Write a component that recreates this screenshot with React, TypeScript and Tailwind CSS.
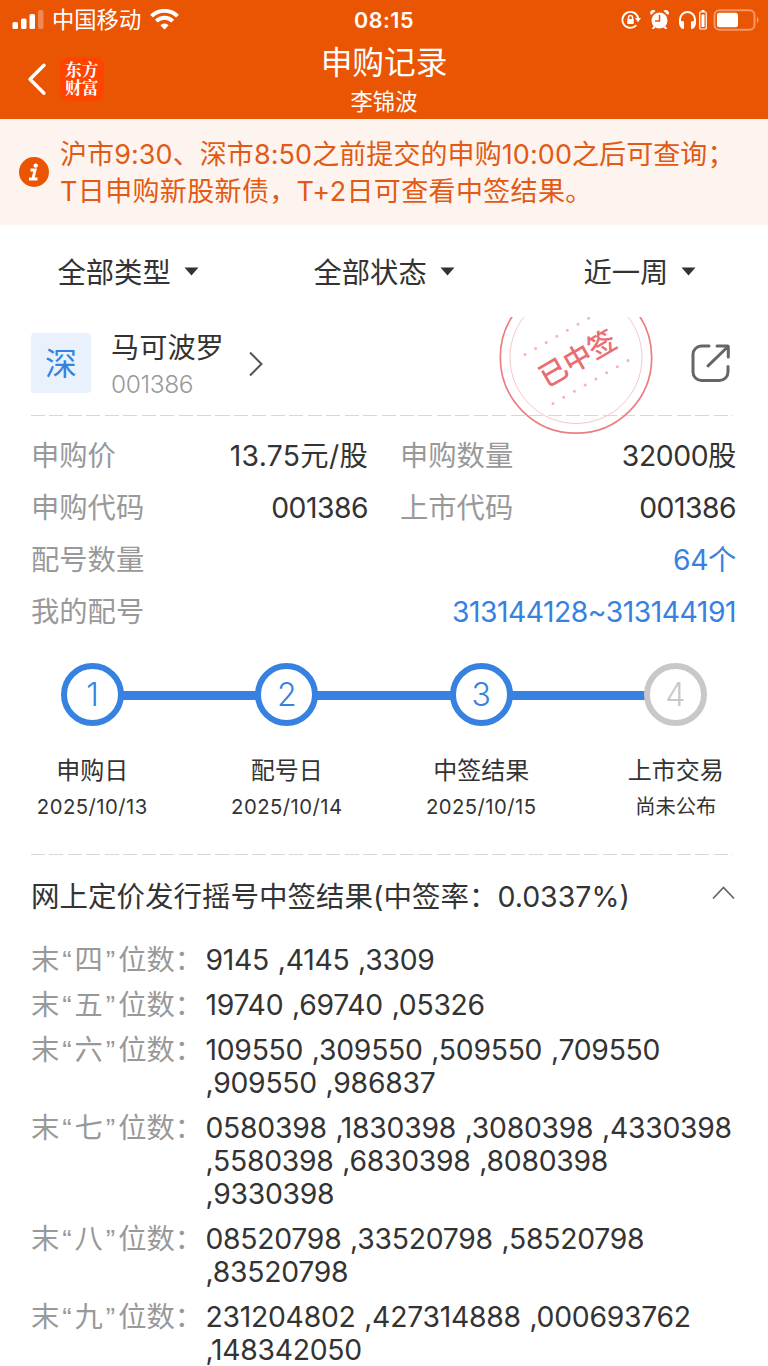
import type { ReactNode } from "react";

const filters = [
  { label: "全部类型", pad: "pl-[57.500px] w-[313.500px]" },
  { label: "全部状态", pad: "w-[270px]" },
  { label: "近一周", pad: "" },
];

const steps = [
  { n: 1, title: "申购日", date: "2025/10/13", done: true },
  { n: 2, title: "配号日", date: "2025/10/14", done: true },
  { n: 3, title: "中签结果", date: "2025/10/15", done: true },
  { n: 4, title: "上市交易", date: "尚未公布", done: false },
];

const results = [
  { digit: "四", lines: ["9145 ,4145 ,3309"] },
  { digit: "五", lines: ["19740 ,69740 ,05326"] },
  { digit: "六", lines: ["109550 ,309550 ,509550 ,709550", ",909550 ,986837"] },
  { digit: "七", lines: ["0580398 ,1830398 ,3080398 ,4330398", ",5580398 ,6830398 ,8080398", ",9330398"] },
  { digit: "八", lines: ["08520798 ,33520798 ,58520798", ",83520798"] },
  { digit: "九", lines: ["231204802 ,427314888 ,000693762", ",148342050"] },
];

function StatusBar() {
  return (
    <div className="grid h-[38px] grid-cols-[1fr_80px_1fr] items-center">
      <div className="flex items-center pl-3">
        <svg width="32" height="20" viewBox="0 0 32 20" fill="#fff">
          <rect x="0.5" y="12" width="5.5" height="7" rx="1.5" />
          <rect x="9" y="8.5" width="5.5" height="10.5" rx="1.5" />
          <rect x="17.500" y="4" width="5.5" height="15" rx="1.5" />
          <rect x="26" y="0" width="5.5" height="19" rx="1.5" opacity="0.3" />
        </svg>
        <span className="ml-2 pt-px text-[22.300px] leading-[38px]">中国移动</span>
        <svg className="ml-[9px] -mt-px" width="29" height="21" viewBox="0 0 29 21" fill="none" stroke="#fff" strokeWidth="4">
          <path d="M1.500 7.200a18.500 18.500 0 0 1 26 0" />
          <path d="M6.300 12.200a11.600 11.600 0 0 1 16.400 0" />
          <path d="M14.500 20.600l-4.200-4.300a6 6 0 0 1 8.400 0z" fill="#fff" stroke="none" />
        </svg>
      </div>
      <span className="pt-px text-center text-[21.500px] font-semibold tracking-[0.500px]">08:15</span>
      <div className="flex items-center justify-end pr-[8px]">
        <svg width="20" height="20" viewBox="0 0 20 20" fill="none" stroke="#fff" strokeWidth="1.8">
          <path d="M17.200 8a8 8 0 1 0-1.800 7.200" />
          <path d="M14 8h6l-3 4.200z" fill="#fff" stroke="none" />
          <rect x="6.300" y="9" width="6.400" height="5" fill="#fff" stroke="none" />
          <path d="M7.500 9V7.500a2 2 0 0 1 4 0V9" strokeWidth="1.400" />
        </svg>
        <svg className="ml-[9px]" width="19" height="20" viewBox="0 0 19 20">
          <circle cx="9.500" cy="10.500" r="8" fill="#fff" />
          <path d="M1 5a3 3 0 0 1 4.500-4zM18 5a3 3 0 0 0-4.500-4zM3.500 16l-1.800 3h2l1.800-1.500zM15.500 16l1.800 3h-2l-1.800-1.500z" fill="#fff" />
          <path d="M9.500 5v6H5" fill="none" stroke="#ea5504" strokeWidth="1.500" />
        </svg>
        <svg className="ml-[9px]" width="19" height="20" viewBox="0 0 19 20">
          <path d="M2 13V9.500a7.500 7.500 0 0 1 15 0V13" fill="none" stroke="#fff" strokeWidth="2" />
          <path d="M1 10.500l5 1v7.500l-2.500-.5q-3-3-2.500-8zM18 10.500l-5 1v7.500l2.500-.5q3-3 2.500-8z" fill="#fff" />
        </svg>
        <svg className="ml-[2px]" width="8" height="20" viewBox="0 0 8 20">
          <path d="M2.500 0h3v2h-3z" fill="#fff" />
          <rect x="0.750" y="2" width="6.500" height="17" rx="1" fill="none" stroke="#fff" strokeWidth="1.200" />
          <rect x="2.500" y="4.500" width="3" height="12.500" fill="#fff" />
        </svg>
        <svg className="ml-[6px]" width="47" height="22" viewBox="0 0 47 22">
          <rect x="1.500" y="1.200" width="40" height="19.600" rx="5" fill="none" stroke="#fff" strokeOpacity="0.400" strokeWidth="2" />
          <rect x="4" y="3.800" width="21" height="14.400" rx="2.500" fill="#fff" />
          <path d="M44 7.500q3 3.500 0 7z" fill="#fff" opacity="0.500" />
        </svg>
      </div>
    </div>
  );
}

function Header() {
  return (
    <header className="h-[119px] bg-[#ea5504] text-white">
      <StatusBar />
      <div className="grid h-[81px] grid-cols-3">
        <div className="flex items-center pl-[27px]">
          <svg width="20" height="34" viewBox="0 0 20 34" fill="none" stroke="#fff" strokeWidth="3.400" strokeLinecap="round" strokeLinejoin="round">
            <path d="M17 3.200L3 17.200l14 14" />
          </svg>
          <p className="ml-[13px] h-[44px] w-[44px] rounded-[9px] bg-[#ff4300] px-[5px] pt-[3px] font-[Noto_Serif_CJK_SC,Noto_Sans_CJK_SC,sans-serif] text-[16.800px] font-bold leading-[18px]">
            东方财富
          </p>
        </div>
        <div className="flex flex-col items-center pt-px">
          <h1 className="h-[47px] text-[31.700px] leading-[47px]">申购记录</h1>
          <p className="text-[22.300px] leading-[31px]">李锦波</p>
        </div>
      </div>
    </header>
  );
}

function Notice() {
  return (
    <section className="flex h-[106px] items-center bg-[#fdf4ef] pl-[19px] text-[#e25a14]">
      <div className="flex h-[30px] w-[30px] items-center justify-center rounded-full bg-[#ea5504]">
        <svg width="12" height="18" viewBox="0 0 12 18" fill="none" stroke="#fff" strokeWidth="2.900">
          <path d="M2.500 7h4.600L5 15.500M1 16h8.500" />
          <circle cx="7.700" cy="2.600" r="2.200" fill="#fff" stroke="none" />
        </svg>
      </div>
      <div className="ml-[11px] whitespace-nowrap pt-[2px] text-[27px] leading-[37px]">
        <p className="tracking-[0.080px]">沪市9:30、深市8:50之前提交的申购10:00之后可查询；</p>
        <p className="tracking-[0.350px]">T日申购新股新债，T+2日可查看中签结果。</p>
      </div>
    </section>
  );
}

function Filters() {
  return (
    <nav className="flex h-[92px] items-center text-[28.300px]">
      {filters.map((f) => (
        <button key={f.label} className={"flex items-center " + f.pad}>
          <span className="pt-[3px] leading-[40px]">{f.label}</span>
          <svg className="ml-[13px]" width="15" height="9" viewBox="0 0 15 9" fill="#333">
            <path d="M0.500 0.500h14l-7 8z" />
          </svg>
        </button>
      ))}
    </nav>
  );
}

function Divider() {
  return <div className="h-[1px] w-[702px] bg-[repeating-linear-gradient(90deg,#d8d8d8_0_14px,transparent_14px_18.450px)]" />;
}

function Stamp() {
  return (
    <svg className="absolute left-[468px] top-0" width="156" height="118" viewBox="0 0 156 118" fill="none">
      <circle cx="77" cy="40.500" r="75.700" stroke="#ec7e82" strokeWidth="1.700" />
      <circle cx="77" cy="40.500" r="66" stroke="#f6c6c8" strokeWidth="1" />
      <path d="M26 37.500L90 1" stroke="#f3b4b7" strokeWidth="3" strokeLinecap="round" strokeDasharray="0 12.200" />
      <path d="M54 86.500L129 43.500" stroke="#f3b4b7" strokeWidth="3" strokeLinecap="round" strokeDasharray="0 12.350" />
      <text x="78" y="51" textAnchor="middle" transform="rotate(-30 79 40)" fill="#ea6d72" fontSize="28" fontWeight="500">已中签</text>
    </svg>
  );
}

function StockRow() {
  return (
    <section className="relative ml-[31px] h-[98px]">
      <div className="flex h-[76px] pt-4">
        <div className="flex h-[60px] w-[60px] items-center justify-center rounded-[4px] bg-[#e8f1fc] pt-[2px] text-[32px] text-[#3782e0]">深</div>
        <div className="-mt-[4px] ml-5 w-[113px]">
          <p className="text-[28.200px] leading-[38px]">马可波罗</p>
          <p className="text-[24.500px] font-[350] leading-[35px] tracking-[-0.400px] text-[#999]">001386</p>
        </div>
        <svg className="ml-[24px] mt-[18px]" width="16" height="26" viewBox="0 0 16 26" fill="none" stroke="#555" strokeWidth="2">
          <path d="M2 1.500L13.500 13 2 24.500" />
        </svg>
        <svg className="ml-[427px] mt-[11px]" width="40" height="39" viewBox="0 0 40 39" fill="none" stroke="#666" strokeWidth="3" strokeLinecap="round">
          <path d="M18 2h-7.500a8.500 8.500 0 0 0-8.500 8.500v17.500a8.500 8.500 0 0 0 8.500 8.500h18a8.500 8.500 0 0 0 8.500-8.500v-5.500" />
          <path d="M26 2h10.500q.8 0 .8.800V13M36.500 3L17 21.800" />
        </svg>
      </div>
      <div className="pt-[22px]"><Divider /></div>
      <Stamp />
    </section>
  );
}

function Field({ label, children, className = "" }: { label: string; children: ReactNode; className?: string }) {
  return (
    <div className={"flex h-[52px] items-center justify-between whitespace-nowrap " + className}>
      <dt className="text-[#999]">{label}</dt>
      <dd className="text-[#333]">{children}</dd>
    </div>
  );
}

function Details() {
  return (
    <dl className="ml-[31px] mt-[15px] grid w-[705px] grid-cols-[337px_336px] gap-x-[32px] text-[28.300px]">
      <Field label="申购价"><span className="tracking-[0.300px]">13.75元/股</span></Field>
      <Field label="申购数量"><span className="tracking-[-0.400px]">32000股</span></Field>
      <Field label="申购代码"><span className="tracking-[-0.500px]">001386</span></Field>
      <Field label="上市代码"><span className="tracking-[-0.500px]">001386</span></Field>
      <Field label="配号数量" className="col-span-2"><span className="tracking-[-0.400px] text-[#3782e0]">64个</span></Field>
      <Field label="我的配号" className="col-span-2"><span className="tracking-[-0.480px] text-[#3782e0]">313144128~313144191</span></Field>
    </dl>
  );
}

function Timeline() {
  return (
    <section className="mt-[25px] h-[191px]">
      <div className="ml-[61px] flex items-center">
        {steps.map((s, i) => (
          <div key={s.n} className="flex items-center">
            {i > 0 && <div className="-mx-[2px] mt-px h-[9px] w-[135.300px] bg-[#3782e0]" />}
            <div className={s.done ? "relative flex h-[63px] w-[63px] items-center justify-center rounded-full border-[6px] border-[#3782e0] bg-white text-[32px] font-[350] text-[#3782e0]" : "relative flex h-[63px] w-[63px] items-center justify-center rounded-full border-[6px] border-[#c8c8c8] bg-white text-[32px] font-[350] text-[#c8c8c8]"}>{s.n}</div>
          </div>
        ))}
      </div>
      <div className="-ml-[5px] mt-[27px] grid w-[778px] grid-cols-4 text-center text-[#333]">
        {steps.map((s) => (
          <div key={s.n}>
            <p className="text-[24px] leading-[36px]">{s.title}</p>
            <p className={s.done ? "text-[20.300px] leading-[36px] tracking-[0.450px]" : "text-[20.300px] leading-[36px]"}>{s.date}</p>
          </div>
        ))}
      </div>
    </section>
  );
}

function Quote({ children }: { children: string }) {
  return <span className="inline-block w-[15.300px] text-center font-[Liberation_Sans,sans-serif] leading-none">{children}</span>;
}

function Results() {
  return (
    <section className="ml-[31px]">
      <Divider />
      <div className="flex h-[88px] items-center">
        <h2 className="-mt-[4px] w-[680px] whitespace-nowrap text-[28.500px] leading-[84px]">网上定价发行摇号中签结果(中签率：0.0337%)</h2>
        <svg className="-mt-[14px]" width="25" height="15" viewBox="0 0 25 15" fill="none" stroke="#666" strokeWidth="1.800">
          <path d="M2 13.500L12.500 2.500 23 13.500" />
        </svg>
      </div>
      <div className="mt-px flex flex-col gap-3 whitespace-nowrap text-[28.300px] leading-[33px]">
        {results.map((r) => (
          <div key={r.digit} className="flex">
            <div className="h-[33px] w-[174.500px] text-[#999]">末<Quote>“</Quote>{r.digit}<Quote>”</Quote>位数：</div>
            <div className="tracking-[-0.250px] [word-spacing:1px]">
              {r.lines.map((l) => <p key={l}>{l}</p>)}
            </div>
          </div>
        ))}
      </div>
    </section>
  );
}

export default function App() {
  return (
    <main className="h-[1366px] w-[768px] overflow-hidden bg-white font-[Inter,Noto_Sans_CJK_SC,sans-serif] font-normal text-[#333]">
      <Header />
      <Notice />
      <Filters />
      <StockRow />
      <Details />
      <Timeline />
      <Results />
    </main>
  );
}
